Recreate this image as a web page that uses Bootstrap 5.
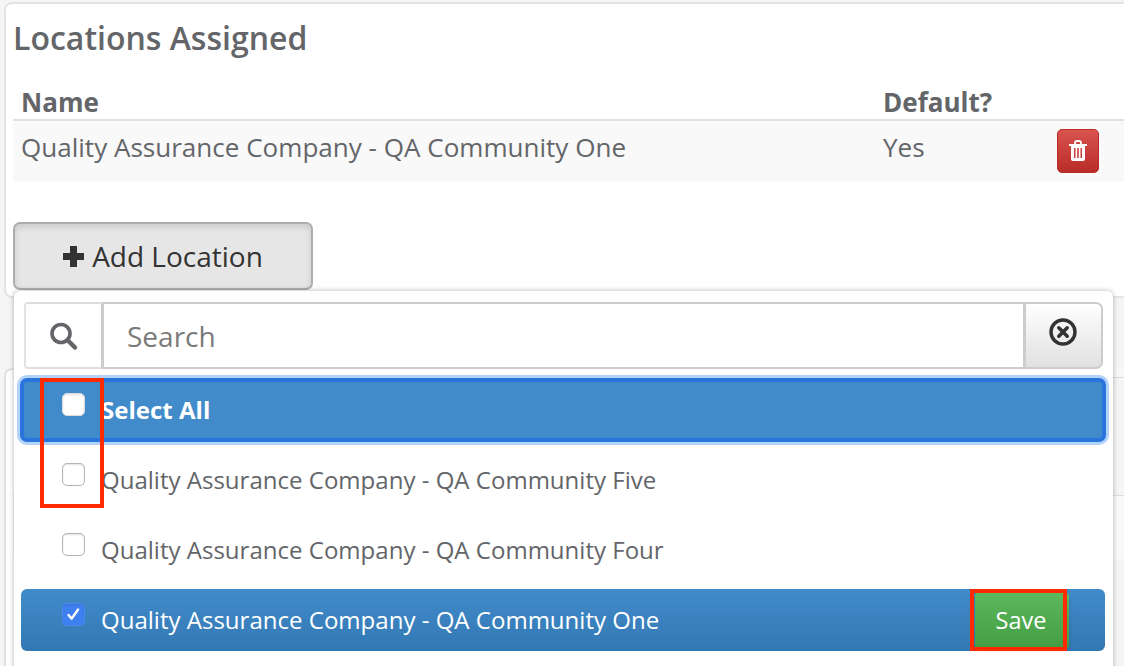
<!DOCTYPE html>
<html lang="en">
<head>
    <meta charset="UTF-8">
    <meta name="viewport" content="width=device-width, initial-scale=1.0">
    <title>Locations Assigned</title>
    <link href="https://cdn.jsdelivr.net/npm/bootstrap@5.3.0/dist/css/bootstrap.min.css" rel="stylesheet">
    <style>
        html, body {
            height: 666px;
            overflow: hidden;
        }
        body {
            background: #f5f5f5;
            color: #636569;
            font-family: "Open Sans", "Liberation Sans", sans-serif;
            font-size: 26.05px;
            position: relative;
        }
        .loc-panel {
            margin: 2px -30px 0 4px;
            height: 296px;
            padding: 13px 0 0 7px;
            background: #fff;
            border: 2px solid #e4e4e4;
            border-radius: 8px;
        }
        .loc-title {
            font-size: 32px;
            font-weight: 600;
            line-height: 42px;
            margin: 0 0 24px 0;
            color: #636569;
        }
        .loc-table {
            width: 1140px;
            margin: 0;
            table-layout: fixed;
        }
        .loc-table th {
            font-weight: 700;
            height: 37px;
            padding: 0 8px 2px;
            line-height: 30px;
            color: #636569;
            border-bottom: 2px solid #e0e0e0;
        }
        .loc-table td {
            height: 62px;
            padding: 7px 8px 0;
            border: 0;
            background: #f9f9f9;
            color: #636569;
            vertical-align: top;
        }
        .col-name {
            width: 862px;
        }
        .col-default {
            width: 174px;
        }
        .col-action {
            width: 104px;
        }
        .btn-trash {
            display: flex;
            align-items: center;
            justify-content: center;
            width: 42px;
            height: 44px;
            margin-top: 1px;
            padding: 0;
            background: linear-gradient(#d9534f, #b92c28);
            border: 1px solid #b92c28;
            border-radius: 5px;
        }
        .btn-add {
            display: flex;
            align-items: center;
            justify-content: center;
            gap: 8px;
            width: 300px;
            height: 68px;
            margin-top: 40px;
            padding: 0;
            font-size: 28px;
            color: #333;
            background: #e6e6e6;
            border: 2px solid #adadad;
            border-radius: 7px;
            box-shadow: inset 0 3px 6px rgba(0,0,0,.125);
        }
        .btn-add:hover {
            background: #e6e6e6;
            color: #333;
        }
        .next-panel {
            margin: 70px 30px 0 4px;
            height: 400px;
            padding-left: 7px;
            background: #fff;
            border: 2px solid #e0e0e0;
            border-radius: 8px 8px 0 0;
        }
        .next-head {
            height: 10px;
            margin: -2px -60px 0 0;
            background: #f7f7f7;
            border-bottom: 1px solid #dcdcdc;
        }
        .next-row {
            height: 64px;
            margin: 117px -60px 0 0;
            background: #f9f9f9;
            border-top: 1px solid #dcdcdc;
        }
        .loc-menu {
            position: absolute;
            left: 14px;
            top: 291px;
            width: 1099px;
            height: 400px;
            padding: 11px 7px 0;
            background: #fff;
            border-radius: 6px;
            box-shadow: 0 0 5px rgba(60,60,90,.4);
        }
        .search-group {
            margin: 0 0 10px 3px;
            width: 1079px;
            height: 67px;
        }
        .search-group .input-group-text {
            width: 79px;
            justify-content: center;
            background: #fff;
            border: 2px solid #e2e2e2;
            border-right: 2px solid #ccc;
            border-top-color: #ddd;
            border-bottom-color: #ddd;
            border-radius: 4px 0 0 4px;
            padding: 0;
        }
        .search-group .form-control {
            margin-left: -2px;
            border: 2px solid #ccc;
            border-radius: 0;
            font-size: 28px;
            padding: 0 23px;
            color: #636569;
            box-shadow: none;
        }
        .search-group .form-control::placeholder {
            color: #7a7a7a;
            opacity: 1;
        }
        .btn-clear {
            width: 79px;
            padding: 0 2px 8px 0;
            margin-left: -2px;
            border: 2px solid #ccc;
            border-radius: 0 7px 7px 0;
            background: linear-gradient(#fff, #e0e0e0);
            display: flex;
            align-items: center;
            justify-content: center;
        }
        .loc-list {
            display: flex;
            flex-direction: column;
            gap: 8px;
        }
        .loc-row {
            display: flex;
            align-items: center;
            height: 62px;
            margin-right: 1px;
            background: #fff;
            color: #636569;
            font-size: 24.04px;
            border: 0;
            padding: 0;
            border-radius: 6px;
        }
        .loc-row .check-wrap {
            width: 80px;
            flex: none;
            align-self: flex-start;
            display: flex;
            padding: 14px 0 0 41px;
        }
        .loc-row .form-check-input {
            flex: none;
            width: 23px;
            height: 23px;
            margin: 0;
            border: 1px solid #b5b5b5;
            border-radius: 5px;
            box-shadow: inset 0 1px 2px rgba(0,0,0,.12);
        }
        .loc-row .form-check-input:checked {
            background-color: #3f80f0;
            border-color: #4a8af5;
            background-image: url("data:image/svg+xml,%3csvg xmlns='http://www.w3.org/2000/svg' viewBox='0 0 23 23'%3e%3cpath fill='none' stroke='%23fff' stroke-width='2.600' stroke-linecap='round' stroke-linejoin='round' d='M6 12l3.500 4L16.500 6'/%3e%3c/svg%3e");
        }
        .loc-row.is-selected {
            color: #fff;
            background: linear-gradient(#428bca, #3278b3);
        }
        .loc-row.is-focused {
            color: #fff;
            font-weight: 700;
            background: #428bca;
            outline: 4px solid #2a74de;
            outline-offset: -3px;
            box-shadow: 0 0 0 4px #b3d2f8;
        }
        .loc-row.is-focused .form-check-input {
            border-color: #ddd;
        }
        .btn-save {
            width: 94px;
            height: 55px;
            margin-left: auto;
            margin-right: 36px;
            padding: 2px 2px 0 0;
            color: #fff;
            font-size: 23.500px;
            background: linear-gradient(#5cb85c, #449d44);
            border: 0;
            border-radius: 3px;
            box-shadow: 0 2px 4px rgba(0,0,0,.15);
        }
        .mark-box {
            position: absolute;
            border: 4px solid #ff2a00;
            pointer-events: none;
        }
        .mark-check {
            left: 40px;
            top: 378px;
            width: 64px;
            height: 130px;
        }
        .mark-save {
            left: 970px;
            top: 589px;
            width: 97px;
            height: 62px;
        }
    </style>
</head>
<body>
    <div class="loc-panel">
        <h4 class="loc-title">Locations Assigned</h4>
        <table class="table loc-table">
            <thead>
                <tr>
                    <th class="col-name">Name</th>
                    <th class="col-default">Default?</th>
                    <th class="col-action"></th>
                </tr>
            </thead>
            <tbody>
                <tr>
                    <td>Quality Assurance Company - QA Community One</td>
                    <td>Yes</td>
                    <td>
                        <button class="btn btn-trash" type="button" aria-label="Delete">
                            <svg width="20" height="22" viewBox="0 0 20 22"><path d="M1 5h18M7 5V3q0-2 2-2h2q2 0 2 2v2" fill="none" stroke="#fff" stroke-width="1.800"/><path fill-rule="evenodd" d="M3 6h14v13q0 2-2 2H5q-2 0-2-2zM6 8v10h1.500V8zm3.200 0v10h1.600V8zm3.300 0v10H14V8z" fill="#fff"/></svg>
                        </button>
                    </td>
                </tr>
            </tbody>
        </table>
        <button class="btn btn-add" type="button">
            <svg width="21" height="21" viewBox="0 0 21 21"><path d="M7 0h7v7h7v7h-7v7H7v-7H0V7h7z" fill="#333"/></svg>
            Add Location
        </button>
    </div>

    <div class="next-panel">
        <div class="next-head"></div>
        <div class="next-row"></div>
    </div>

    <div class="loc-menu">
        <div class="input-group search-group">
            <span class="input-group-text">
                <svg width="30" height="30" viewBox="0 0 30 30"><circle cx="12" cy="12.500" r="9" fill="none" stroke="#636569" stroke-width="3.600"/><path d="M18.500 19l7.500 7.500" stroke="#636569" stroke-width="4.500" stroke-linecap="round"/></svg>
            </span>
            <input class="form-control" type="text" placeholder="Search">
            <button class="btn btn-clear" type="button" aria-label="Clear">
                <svg width="28" height="28" viewBox="0 0 28 28"><circle cx="14" cy="14" r="12" fill="none" stroke="#333" stroke-width="3.400"/><path d="M9.800 9.800l8.400 8.400M18.200 9.800l-8.400 8.400" stroke="#333" stroke-width="3.600" stroke-linecap="round"/></svg>
            </button>
        </div>
        <div class="loc-list">
            <label class="loc-row is-focused">
                <span class="check-wrap"><input class="form-check-input" type="checkbox"></span>
                Select All
            </label>
            <label class="loc-row">
                <span class="check-wrap"><input class="form-check-input" type="checkbox"></span>
                Quality Assurance Company - QA Community Five
            </label>
            <label class="loc-row">
                <span class="check-wrap"><input class="form-check-input" type="checkbox"></span>
                Quality Assurance Company - QA Community Four
            </label>
            <label class="loc-row is-selected">
                <span class="check-wrap"><input class="form-check-input" type="checkbox" checked></span>
                Quality Assurance Company - QA Community One
                <button class="btn btn-save" type="button">Save</button>
            </label>
        </div>
    </div>

    <div class="mark-box mark-check"></div>
    <div class="mark-box mark-save"></div>
</body>
</html>
